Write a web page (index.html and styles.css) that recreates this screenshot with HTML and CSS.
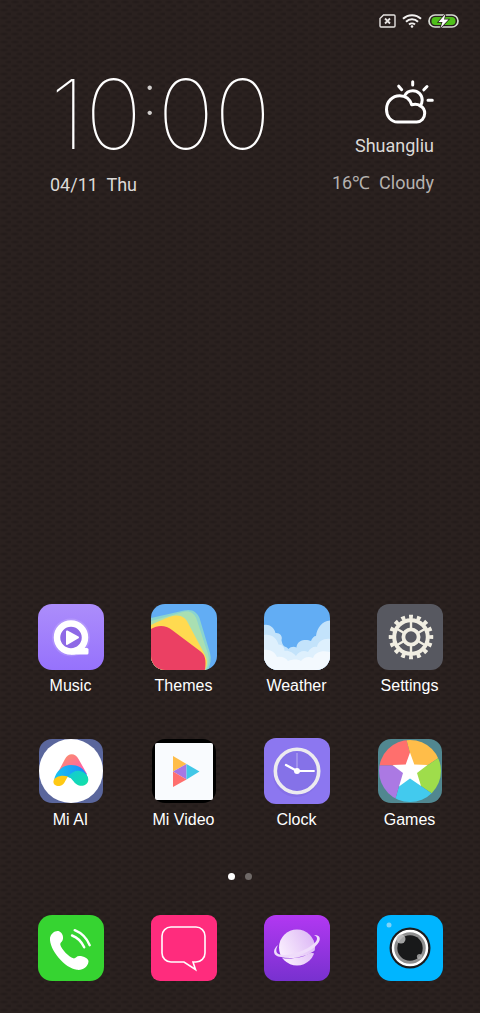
FILE: index.html
```
<!DOCTYPE html>
<html lang="en">
<head>
    <meta charset="UTF-8">
    <meta name="viewport" content="width=device-width, initial-scale=1.0">
    <title>Home</title>
    <link rel="stylesheet" href="styles.css">
</head>
<body>
    <header class="status-bar">
        <svg width="17" height="14" viewBox="0 0 17 14" fill="none" stroke="#e6e3e1" stroke-width="1.4">
            <path d="M4.5 1H15a1 1 0 0 1 1 1v10a1 1 0 0 1-1 1H2a1 1 0 0 1-1-1V4.500z"/>
            <path d="M6 4.500l5 5M11 4.500l-5 5" stroke-width="1.800"/>
        </svg>
        <svg width="20" height="14" viewBox="0 0 20 14" fill="none" stroke="#f2f0ef" stroke-width="2">
            <path d="M1 4.800a13 13 0 0 1 18 0M4 7.800a8.600 8.600 0 0 1 12 0M7 10.600a4.400 4.400 0 0 1 6 0"/>
            <circle cx="10" cy="12.500" r="1.300" fill="#f2f0ef" stroke="none"/>
        </svg>
        <svg width="31" height="14" viewBox="0 0 31 14">
            <rect x="1" y="1" width="29" height="12" rx="6" fill="none" stroke="#d9dcd6" stroke-width="1.700"/>
            <rect x="3.500" y="3" width="24" height="8" rx="4" fill="#4fc01b"/>
            <path d="M17.500 0l-7 8h4l-2 6 8-8.500h-4.500z" fill="#fff" stroke="#2a211f" stroke-width="1.500" paint-order="stroke"/>
        </svg>
    </header>

    <main class="home">
        <section class="widgets">
            <div class="clock">
                <div class="time">10<span class="colon">:</span>00</div>
                <div class="date">04/11&nbsp; Thu</div>
            </div>
            <div class="weather">
                <svg width="49" height="44" viewBox="0 0 49 44" fill="none" stroke="#fff" stroke-width="3" stroke-linecap="round">
                    <path d="M12.500 42C6 42 1.500 36.500 1.500 29.500c0-8 6-13.700 13.200-13.700 5.800 0 10.300 3.600 12 9 6.500-2 13 2 13 8.500 0 5-3.500 8.700-8 8.700z" stroke-linejoin="round"/>
                    <path d="M19.500 16c1.600-3.500 4.700-5.300 8.300-5.300 5.200 0 9.400 4.200 9.400 9.300 0 2.400-.8 4.500-2.200 6"/>
                    <path d="M27.700 1.700v3.200M13.700 6.200l3 3.500M42 6.500l-3.200 3.300M43 20.300h4.300"/>
                </svg>
                <div class="city">Shuangliu</div>
                <div class="conditions">16℃&nbsp; Cloudy</div>
            </div>
        </section>

        <section class="apps">
            <button class="app">
                <svg class="icon" viewBox="0 0 66 66">
                    <defs>
                        <linearGradient id="music" x1="0" y1="0" x2="0" y2="1">
                            <stop offset="0" stop-color="#ac8dfb"/>
                            <stop offset="1" stop-color="#9672fc"/>
                        </linearGradient>
                    </defs>
                    <rect width="66" height="66" rx="14" fill="url(#music)"/>
                    <circle cx="33" cy="33.500" r="19" fill="#fff" opacity=".15"/>
                    <path d="M33 44h16a1.500 1.500 0 0 1 1.500 1.500V49a1.500 1.500 0 0 1-1.500 1.500H33z" fill="#fff"/>
                    <circle cx="33" cy="33.500" r="14" fill="#8e69e6" stroke="#fff" stroke-width="6.500"/>
                    <path d="M29 27.500L40 33.500 29 40z" fill="#fff" stroke="#fff" stroke-width="2" stroke-linejoin="round"/>
                </svg>
                <span>Music</span>
            </button>
            <button class="app">
                <svg class="icon" viewBox="0 0 66 66">
                    <defs>
                        <clipPath id="tile"><rect width="66" height="66" rx="14"/></clipPath>
                    </defs>
                    <g clip-path="url(#tile)">
                        <rect width="66" height="66" fill="#62adf4"/>
                        <path d="M0 14L33 6.500C41 4.500 46 8 48.500 14l10.500 35c1.500 6 .5 11-2 17H0z" fill="#8ad4cf"/>
                        <path d="M0 17l32-9c7-1.500 11 1 13.500 7L57 50c1.500 6 .5 11-2 16H0z" fill="#a9dfb2"/>
                        <path d="M0 21c8-4 17-8 22-9 8-1.500 12 1.500 15 7l17 32c3 6 2 10 0 15H0z" fill="#ffda50"/>
                        <path d="M0 25c7-4.500 15-4 21 1l28 21c5 4 6.500 8 5 19H0z" fill="#eb4063"/>
                    </g>
                </svg>
                <span>Themes</span>
            </button>
            <button class="app">
                <svg class="icon" viewBox="0 0 66 66">
                    <g clip-path="url(#tile)">
                        <rect width="66" height="66" fill="#62adf4"/>
                        <path d="M0 21c5-1 10 2 11.500 8 4-.5 7.500 3 6 7 .5 3 1 5 3 6.500 2 .5 3 1.500 4 2.500 2-2 5-3 8-1.500 0-4 4-8 8.500-7.500 3 0 5 .5 6 1 1-3 3-5 5-5 1-8 6-15 14-15.500V66H0z" fill="#c3e3fb"/>
                        <path d="M0 31c7-1.500 13 3 14.500 9.500 4 0 6 3 6 6.500 4-1 9 2 11.500 5 3-5 8-6 12-4 2-4 6-6 9-5 1-6 7-9 14-8V66H0z" fill="#def0fd"/>
                        <path d="M0 46c6-1 11 2 13 7 5-1 9 1 11 4 5-2 10-2 13 0 3-4 8-5 12-3 2-6 9-8 17-6v18H0z" fill="#f3f9fe"/>
                    </g>
                </svg>
                <span>Weather</span>
            </button>
            <button class="app">
                <svg class="icon" viewBox="0 0 66 66">
                    <rect width="66" height="66" rx="12" fill="#575860"/>
                    <g fill="none" stroke="#f1eee2">
                        <circle cx="34" cy="33" r="20" stroke-width="4.500" pathLength="32" stroke-dasharray="1 1" stroke-dashoffset=".5"/>
                        <circle cx="34" cy="33" r="16.800" stroke-width="4"/>
                        <circle cx="34" cy="33" r="7.600" stroke-width="3.800"/>
                        <path d="M34 17v8M34 41v8M19.700 24.800l7 4M41.300 37.200l7 4M48.300 24.800l-7 4M26.700 37.200l-7 4" stroke-width="2.400"/>
                    </g>
                </svg>
                <span>Settings</span>
            </button>
            <button class="app">
                <svg class="icon" viewBox="0 0 66 66">
                    <defs>
                        <linearGradient id="ai-top" x1="0" y1="0" x2="1" y2="1">
                            <stop offset=".2" stop-color="#fb8a72"/>
                            <stop offset=".8" stop-color="#ff5fa8"/>
                        </linearGradient>
                        <linearGradient id="ai-mid" x1="0" y1="0" x2="1" y2="0">
                            <stop offset="0" stop-color="#18c4f2"/>
                            <stop offset="1" stop-color="#1a86fb"/>
                        </linearGradient>
                        <linearGradient id="ai-end" x1="0" y1="0" x2="1" y2="1">
                            <stop offset="0" stop-color="#15c8d8"/>
                            <stop offset="1" stop-color="#12e2a4"/>
                        </linearGradient>
                    </defs>
                    <rect x="1" y="1" width="64" height="64" rx="13" fill="#5a669c"/>
                    <circle cx="33" cy="33" r="32" fill="#fff"/>
                    <path d="M18 38l9-17c3-6.500 10.500-6.500 13.500 0L49 36l-16-1z" fill="url(#ai-top)"/>
                    <path d="M16 42c2-9 9-15 17-15 7 0 12 3 15.500 9l1.500 5-11 4C35 39 28 36.500 16 42z" fill="url(#ai-mid)"/>
                    <path d="M30 38.500c4-4.500 8-6.500 12-5.500 5 1 8.500 5 8.300 9-.3 4.500-5 6.500-9.300 5.500-5-1.200-6-7-11-9z" fill="url(#ai-end)"/>
                    <path d="M15.500 43c1-4 7.500-6.500 14.500-4.500-3 3.500-3.500 9-8.500 9.500-3.500.3-6.700-1.700-6-5z" fill="#ffc914"/>
                </svg>
                <span>Mi AI</span>
            </button>
            <button class="app">
                <svg class="icon" viewBox="0 0 66 66">
                    <rect x="1" y="1" width="64" height="64" rx="13"/>
                    <rect x="4" y="5" width="58" height="57" rx="2" fill="#f9fbfe"/>
                    <path d="M22 18v15.500L35.500 26z" fill="#ffbd49"/>
                    <path d="M22 33.500L35.500 26v15.500z" fill="#a777e4"/>
                    <path d="M22 33.500V49l13.500-7.500z" fill="#ff6f6e"/>
                    <path d="M35.500 26v15.500L48.500 33.500z" fill="#41c7e7"/>
                </svg>
                <span>Mi Video</span>
            </button>
            <button class="app">
                <svg class="icon" viewBox="0 0 66 66">
                    <rect width="66" height="66" rx="12" fill="#8c77f0"/>
                    <circle cx="32" cy="36" r="23" fill="#7864d8" opacity=".35"/>
                    <circle cx="33" cy="33" r="21.700" fill="#8572e8" stroke="#ecebef" stroke-width="3.600"/>
                    <path d="M33 15v18" stroke="#c9c0f5" stroke-width=".8"/>
                    <path d="M22 27l11 6" stroke="#fff" stroke-width="2.400" stroke-linecap="round"/>
                    <path d="M33 33h17" stroke="#fff" stroke-width="1.800" stroke-linecap="round"/>
                    <circle cx="33" cy="33" r="3" fill="#fff"/>
                </svg>
                <span>Clock</span>
            </button>
            <button class="app">
                <svg class="icon" viewBox="0 0 66 66">
                    <defs>
                        <clipPath id="ball"><circle cx="33" cy="33" r="31"/></clipPath>
                    </defs>
                    <rect x="1" y="1" width="64" height="64" rx="13" fill="#518790"/>
                    <g clip-path="url(#ball)">
                        <path d="M33 33V15L29 0H0v27.500h15z" fill="#ff6f6d"/>
                        <path d="M33 33V15L29 0h37v17L51 27z" fill="#ffbd49"/>
                        <path d="M33 33l18-6 15-10v46L44 48z" fill="#9fdd4b"/>
                        <path d="M33 33l11 15 20 14v4H17l5-18z" fill="#42caee"/>
                        <path d="M33 33L22 48l-5 18H0V27.500h15z" fill="#ab79e3"/>
                    </g>
                    <path d="M33 14.500l4.300 12 13.200.5-10.500 8 4 13-11-7.500L22 48.500l4-13.500-10.500-8 13.200-.5z" fill="#fff"/>
                </svg>
                <span>Games</span>
            </button>
        </section>

        <div class="pages">
            <i class="dot active"></i>
            <i class="dot"></i>
        </div>
    </main>

    <nav class="dock">
        <button class="app" aria-label="Phone">
            <svg class="icon" viewBox="0 0 66 66">
                <rect width="66" height="66" rx="14" fill="#36d431"/>
                <path d="M12 23c1-5 6-8 9.500-6.500 3 1.300 4.500 6 3 9-1 1.700-2.500 2.500-2.200 4.300 1 4.500 8.500 12 13 13.500 2.200.6 3-2.300 6-2.300 4.500 0 9.500 2.500 9.200 5.500-.4 5-5.500 9-11.500 8.300C27 53.500 11 34.500 12 23z" fill="#fff"/>
                <path d="M34 20.500c5.500 2 9.500 6 12.200 11.800M36.700 15.200c7 2.800 12 8 15 15" fill="none" stroke="#fff" stroke-width="2.400" stroke-linecap="round"/>
            </svg>
        </button>
        <button class="app" aria-label="Messages">
            <svg class="icon" viewBox="0 0 66 66">
                <rect width="66" height="66" rx="9" fill="#ff2c7d"/>
                <path d="M20 12h25a9 9 0 0 1 9 9v17a9 9 0 0 1-9 9h-3l2.500 7.500L33 47H20a9 9 0 0 1-9-9V21a9 9 0 0 1 9-9z" fill="none" stroke="#fff" stroke-width="1.600"/>
            </svg>
        </button>
        <button class="app" aria-label="Browser">
            <svg class="icon" viewBox="0 0 66 66">
                <defs>
                    <linearGradient id="space" x1="0" y1="0" x2="0" y2="1">
                        <stop offset="0" stop-color="#b238f2"/>
                        <stop offset="1" stop-color="#7831cf"/>
                    </linearGradient>
                    <linearGradient id="planet" x1="0" y1=".7" x2="1" y2=".2">
                        <stop offset="0" stop-color="#fbf1fe"/>
                        <stop offset="1" stop-color="#dcb6f5"/>
                    </linearGradient>
                </defs>
                <rect width="66" height="66" rx="12" fill="url(#space)"/>
                <circle cx="33" cy="32.500" r="18" fill="url(#planet)"/>
                <!-- gap under the ring, then the ring itself -->
                <path d="M17 42c12 3 27-.5 37.500-9L51 38.500c-5-2-8 2-14 3.500-7 1.500-14 2-18.500 1z" fill="#8a33da"/>
                <path d="M14 30c-5 4-5.500 9.500 0 11.500 10 3 32-2.500 39.500-12.500 4.500-5.500 2-9.500-3.500-9 4 1.500 4 5 0 8.500C41 36.500 25 41.500 16 39.500c-4.500-1-4.500-5-2-9.500z" fill="#efdcfa"/>
            </svg>
        </button>
        <button class="app" aria-label="Camera">
            <svg class="icon" viewBox="0 0 66 66">
                <rect width="66" height="66" rx="14" fill="#00b5ff"/>
                <circle cx="12" cy="10" r="2.500" fill="#7fd4f8"/>
                <circle cx="33" cy="33" r="20.500" fill="#1b1c1e"/>
                <circle cx="33" cy="33" r="17" fill="#8f8f8f" stroke="#fff" stroke-width="2.500"/>
                <circle cx="33" cy="33" r="12.700" fill="#18191a"/>
                <circle cx="24" cy="24" r="4.500" fill="#c4c4c4" opacity=".8"/>
                <circle cx="42.500" cy="41.500" r="2.600" fill="#b0b0b0" opacity=".8"/>
            </svg>
        </button>
    </nav>
</body>
</html>
```
FILE: styles.css
```
* {
    box-sizing: border-box;
}
body {
    margin: 0;
    min-height: 100vh;
    display: flex;
    flex-direction: column;
    color: #fff;
    font-family: "Liberation Sans", Arial, sans-serif;
    background-color: #2a211f;
    background-image:
        radial-gradient(ellipse 5px 2px at 4px 2px, rgba(0, 0, 0, 0.2), transparent),
        radial-gradient(ellipse 5px 2px at 9px 6px, rgba(0, 0, 0, 0.2), transparent);
    background-size: 11px 8px;
}
.status-bar {
    display: flex;
    justify-content: flex-end;
    align-items: center;
    gap: 6px;
    height: 41px;
    padding-right: 21px;
}
.home {
    flex: 1;
    display: flex;
    flex-direction: column;
}
.widgets {
    display: flex;
    justify-content: space-between;
    padding: 31px 46px 0 50px;
    font-family: Roboto, sans-serif;
    font-size: 18px;
    line-height: 24px;
    color: #dcd9d7;
}
.time {
    display: flex;
    font-family: Inter, Roboto, sans-serif;
    font-size: 96px;
    font-weight: 100;
    line-height: 84px;
    color: #fff;
}
.colon {
    font-size: 56px;
    font-weight: 200;
    line-height: 46px;
    color: #d0cdcb;
}
.date {
    margin-top: 17px;
}
.weather {
    display: flex;
    flex-direction: column;
    align-items: flex-end;
    padding-top: 8px;
}
.city {
    margin-top: 10px;
}
.conditions {
    margin-top: 13px;
    color: #b5b1af;
}
.apps {
    display: grid;
    grid-template-columns: repeat(4, 1fr);
    row-gap: 42px;
    margin-top: auto;
    padding: 0 14px;
}
.app {
    display: flex;
    flex-direction: column;
    align-items: center;
    padding: 0;
    border: none;
    background: none;
    color: #fff;
    font-family: inherit;
    font-size: 16px;
    line-height: 20px;
    cursor: pointer;
}
.app span {
    margin-top: 6px;
}
.icon {
    display: block;
    width: 66px;
    height: 66px;
}
.pages {
    display: flex;
    justify-content: center;
    gap: 10px;
    padding: 43px 0 35px;
}
.dot {
    width: 7px;
    height: 7px;
    border-radius: 50%;
    background-color: #6f6967;
}
.dot.active {
    background-color: #fff;
}
.dock {
    display: grid;
    grid-template-columns: repeat(4, 1fr);
    padding: 0 14px 32px;
}
```
